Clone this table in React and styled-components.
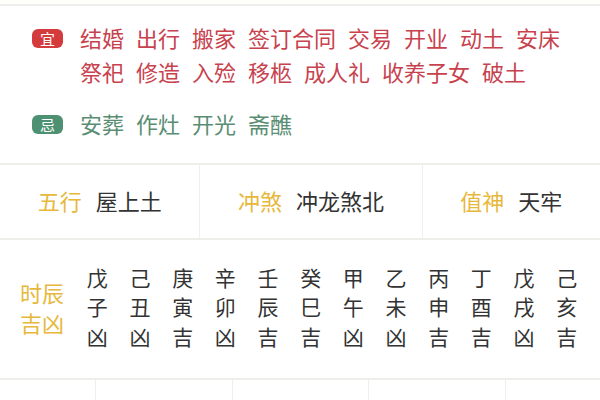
import React from "react";
import styled, { createGlobalStyle } from "styled-components";

const GlobalStyle = createGlobalStyle`
  html, body {
    margin: 0;
    padding: 0;
    background: #ffffff;
  }
  body {
    font-family: "Noto Sans CJK SC", "Noto Sans", sans-serif;
    color: #333333;
    overflow: hidden;
  }
`;

const Page = styled.div`
  width: 600px;
  padding-top: 4px;
  background: #fefefa;
`;

const Section = styled.section`
  background: #ffffff;
  border-top: 2px solid #efeeea;
`;

const YiJiBlock = styled(Section)`
  display: flex;
  flex-direction: column;
  gap: 18px;
  padding: 14px 20px 23px 32px;
`;

const YiJiRow = styled.div`
  display: flex;
  align-items: flex-start;
  gap: 17px;
`;

const Badge = styled.span`
  flex: none;
  width: 31px;
  height: 19px;
  margin-top: 9px;
  border-radius: 6px;
  background: ${(p) => (p.$tone === "good" ? "#d33b3d" : "#4e9172")};
  color: #ffffff;
  font-size: 15px;
  line-height: 19px;
  text-align: center;
`;

const Words = styled.div`
  display: flex;
  flex-wrap: wrap;
  column-gap: 12px;
  font-size: 22px;
  line-height: 34px;
  color: ${(p) => (p.$tone === "good" ? "#c8424e" : "#5a8e74")};
`;

const InfoRow = styled(Section)`
  display: flex;
  height: 73px;
`;

const InfoCell = styled.div`
  flex: 1 1 auto;
  display: flex;
  align-items: center;
  justify-content: center;
  gap: 14px;
  padding-bottom: 3px;
  font-size: 22px;
  & + & {
    border-left: 1px solid #f0efec;
  }
`;

const Label = styled.span`
  color: #e7b83c;
`;

const Value = styled.span`
  color: #333333;
`;

const HoursBlock = styled(Section)`
  display: flex;
  align-items: center;
  height: 140px;
  padding: 0 12px 4px 20px;
  box-sizing: border-box;
`;

const HoursLabel = styled.div`
  width: 44px;
  margin-right: 12px;
  font-size: 22px;
  line-height: 30px;
  color: #e7b83c;
`;

const HoursGrid = styled.div`
  flex: 1;
  display: grid;
  grid-template-columns: repeat(12, 1fr);
`;

const HourCol = styled.div`
  display: flex;
  flex-direction: column;
  align-items: center;
  font-size: 21px;
  line-height: 29.5px;
  color: #333333;
`;

const BottomRow = styled(Section)`
  display: grid;
  grid-template-columns: 0.7fr 1fr 1fr 1fr 0.7fr;
  height: 60px;
`;

const BottomCell = styled.div`
  & + & {
    border-left: 1px solid #f0efec;
  }
`;

const yi = ["结婚", "出行", "搬家", "签订合同", "交易", "开业", "动土", "安床", "祭祀", "修造", "入殓", "移柩", "成人礼", "收养子女", "破土"];
const ji = ["安葬", "作灶", "开光", "斋醮"];

const info = [
  { label: "五行", value: "屋上土" },
  { label: "冲煞", value: "冲龙煞北" },
  { label: "值神", value: "天牢" },
];

const hours = [
  ["戊", "子", "凶"],
  ["己", "丑", "凶"],
  ["庚", "寅", "吉"],
  ["辛", "卯", "凶"],
  ["壬", "辰", "吉"],
  ["癸", "巳", "吉"],
  ["甲", "午", "凶"],
  ["乙", "未", "凶"],
  ["丙", "申", "吉"],
  ["丁", "酉", "吉"],
  ["戊", "戌", "凶"],
  ["己", "亥", "吉"],
];

export default function App() {
  return (
    <Page>
      <GlobalStyle />
      <YiJiBlock>
        <YiJiRow>
          <Badge $tone="good">宜</Badge>
          <Words $tone="good">
            {yi.map((w, i) => (
              <span key={i}>{w}</span>
            ))}
          </Words>
        </YiJiRow>
        <YiJiRow>
          <Badge $tone="bad">忌</Badge>
          <Words $tone="bad">
            {ji.map((w, i) => (
              <span key={i}>{w}</span>
            ))}
          </Words>
        </YiJiRow>
      </YiJiBlock>

      <InfoRow>
        {info.map((it) => (
          <InfoCell key={it.label}>
            <Label>{it.label}</Label>
            <Value>{it.value}</Value>
          </InfoCell>
        ))}
      </InfoRow>

      <HoursBlock>
        <HoursLabel>
          时辰
          <br />
          吉凶
        </HoursLabel>
        <HoursGrid>
          {hours.map((h, i) => (
            <HourCol key={i}>
              {h.map((c, j) => (
                <span key={j}>{c}</span>
              ))}
            </HourCol>
          ))}
        </HoursGrid>
      </HoursBlock>

      <BottomRow>
        {[0, 1, 2, 3, 4].map((i) => (
          <BottomCell key={i} />
        ))}
      </BottomRow>
    </Page>
  );
}
